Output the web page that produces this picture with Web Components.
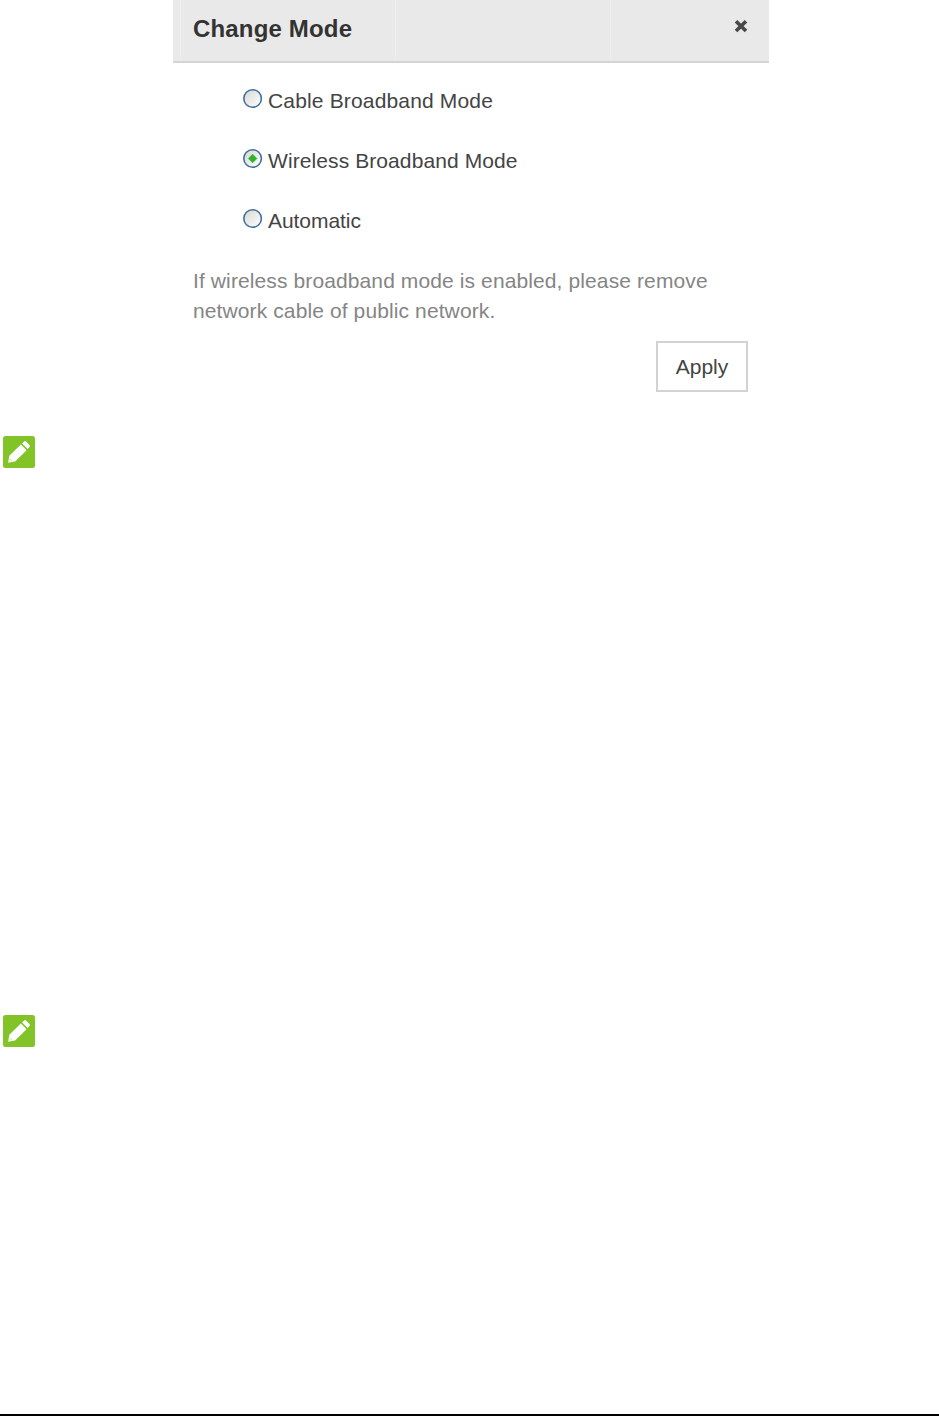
<!DOCTYPE html>
<html lang="en">
<head>
<meta charset="utf-8">
<title>Change Mode</title>
<style>
body { margin: 0; background: #fff; font-family: "Liberation Sans", Arial, sans-serif; }
</style>
</head>
<body>
<manual-page>
  <mode-dialog>
    <span slot="title">Change Mode</span>
    <mode-option style="letter-spacing:.16px">Cable Broadband Mode</mode-option>
    <mode-option checked style="letter-spacing:.09px">Wireless Broadband Mode</mode-option>
    <mode-option style="letter-spacing:-.06px">Automatic</mode-option>
    <span slot="note">If wireless broadband mode is enabled, please remove<br>network cable of public network.</span>
    <apply-button slot="action">Apply</apply-button>
  </mode-dialog>
  <note-icon class="first"></note-icon>
  <note-icon></note-icon>
</manual-page>
<script>
const define = (name, html) => customElements.define(name, class extends HTMLElement {
  constructor() {
    super();
    this.attachShadow({ mode: "open" }).innerHTML = html;
  }
});

define("manual-page", `
<style>
:host { display: flex; flex-direction: column; box-sizing: border-box; height: 1416px; border-bottom: 2px solid #000; overflow: hidden; }
::slotted(mode-dialog) { margin-left: 173px; }
::slotted(note-icon) { margin: 547px 0 0 3px; }
::slotted(note-icon.first) { margin-top: 43px; }
</style><slot></slot>`);

define("mode-dialog", `
<style>
:host { display: block; width: 596px; height: 393px; }
header { display: flex; justify-content: space-between; box-sizing: border-box; height: 63px; padding: 14px 20px 0; border-bottom: 2px solid #d5d5d5;
  background: linear-gradient(#efefef,#efefef) 7px 0/1px 100% no-repeat, linear-gradient(#efefef,#efefef) 222px 0/1px 100% no-repeat, linear-gradient(#efefef,#efefef) 437px 0/1px 100% no-repeat, #e9e9e9; }
h1 { margin: 0; font-size: 24px; line-height: 30px; font-weight: bold; letter-spacing: .17px; color: #333; }
svg { width: 16px; height: 16px; margin-top: 4px; }
.options { display: flex; flex-direction: column; padding: 8px 0 0 69px; }
p { margin: 15px 0 0 20px; padding: 0; font-size: 21px; line-height: 30px; letter-spacing: .11px; color: #858585; white-space: nowrap; }
footer { display: flex; justify-content: flex-end; padding: 15px 21px 0 0; }
</style>
<header><h1><slot name="title"></slot></h1>
<svg viewBox="0 0 16 16"><path d="M3 3.2 13 13M13 3.2 3 13" stroke="#484848" stroke-width="3.7"/></svg></header>
<div class="options"><slot></slot></div>
<p><slot name="note"></slot></p>
<footer><slot name="action"></slot></footer>`);

define("mode-option", `
<style>
:host { display: flex; height: 60px; color: #444; font-size: 21px; line-height: 60px; white-space: nowrap; }
svg { width: 22px; height: 22px; margin: 16px 4px 0 0; flex: none; }
.dot { display: none; }
:host([checked]) .dot { display: block; }
</style>
<svg viewBox="0 0 22 22">
<defs><linearGradient id="g" x2="1" y2="1"><stop stop-color="#d6d6d1"/><stop offset="1" stop-color="#fff"/></linearGradient></defs>
<circle cx="10.6" cy="11.5" r="8.8" fill="url(#g)" stroke="#44709b" stroke-width="1.6"/>
<path class="dot" d="M10.6 7.2 14.9 11.5 10.6 15.8 6.3 11.5Z" fill="#2fb32e" stroke="#2fb32e" stroke-width=".6" stroke-linejoin="round"/></svg>
<span><slot></slot></span>`);

define("apply-button", `
<style>
:host { display: block; width: 92px; height: 51px; }
button { box-sizing: border-box; width: 100%; height: 100%; margin: 0; padding: 0; border: 2px solid #d2d2d2; background: #fff; color: #444; font: 21px/47px "Liberation Sans", Arial, sans-serif; }
</style><button><slot></slot></button>`);

define("note-icon", `
<style>:host { display: block; width: 32px; height: 32px; } svg { display: block; }</style>
<svg width="32" height="32" viewBox="0 0 32 32"><rect width="32" height="32" rx="2.5" fill="#82c428"/>
<path fill="#fff" d="M5.2 26.7 6.3 19.8 17.9 8.6 23.6 14.2 12.1 25.6ZM19.1 7.4 21.1 5.5Q22.1 4.7 23.1 5.5L26.5 8.9Q27.3 9.9 26.5 10.9L24.7 12.9Z"/>
<path d="M7 22.9 9.3 25.1" stroke="#82c428" stroke-opacity=".6" stroke-width=".8"/></svg>`);
</script>
</body>
</html>
